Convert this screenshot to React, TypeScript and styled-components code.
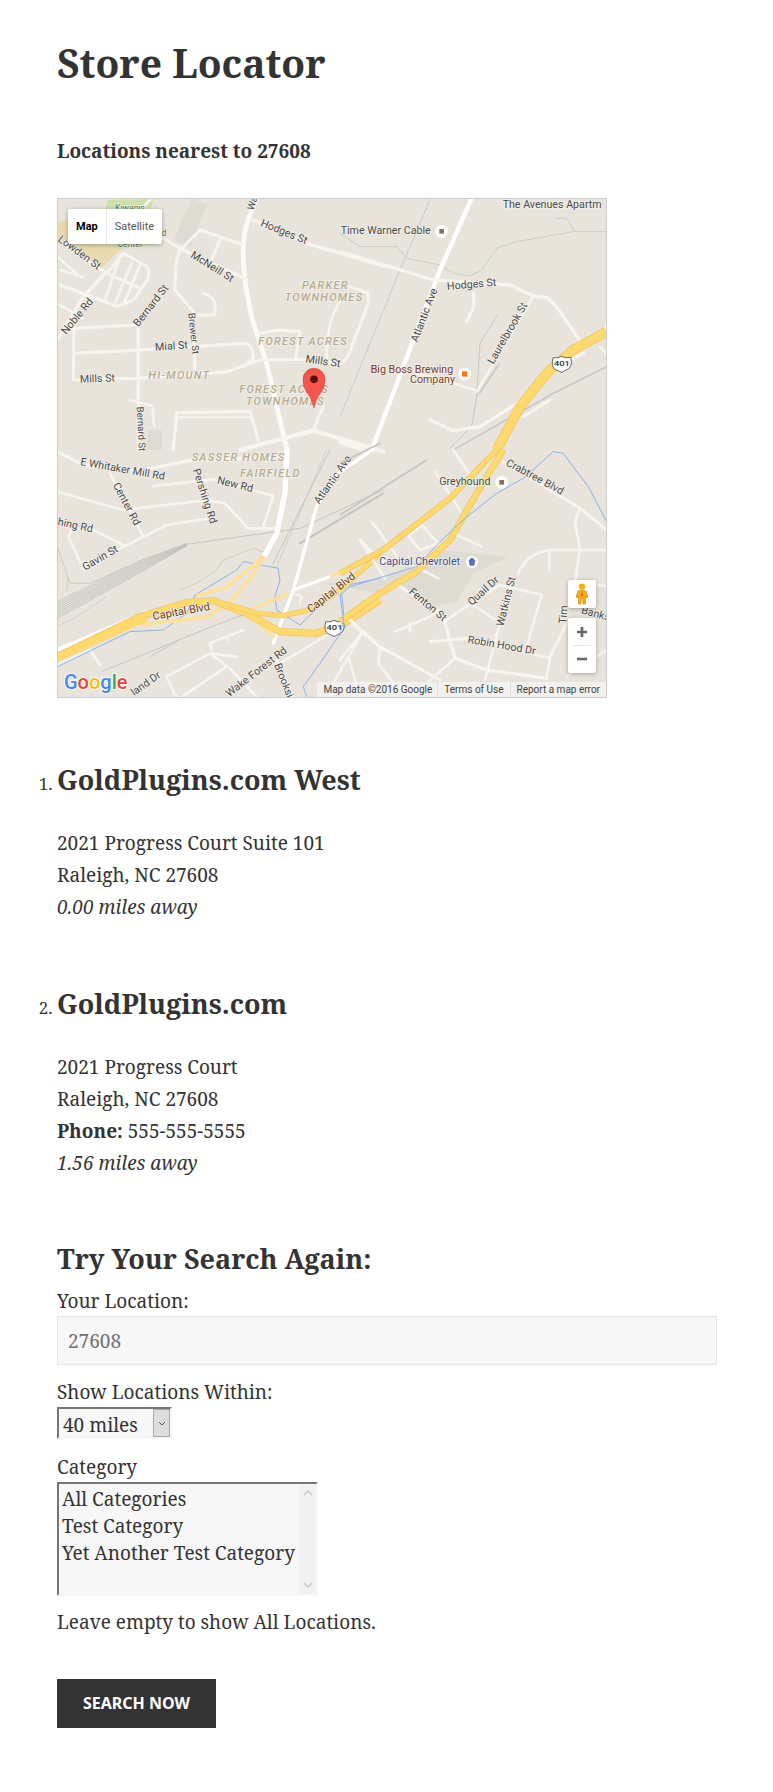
import React from 'react';
import styled, { createGlobalStyle } from 'styled-components';

const Global = createGlobalStyle`
  html, body { margin: 0; padding: 0; background: #fff; }
  body { font-family: "Noto Serif", "DejaVu Serif", serif; color: #333; font-size: 17px; line-height: 32px; }
`;

const Page = styled.main`
  width: 660px;
  padding: 38px 56px 0 57px;
`;
const Title = styled.h1`
  font-size: 39px; line-height: 50px; font-weight: 700; margin: 0 0 47px; color: #333;
`;
const Nearest = styled.p`
  font-size: 19px; line-height: 32px; font-weight: 700; margin: 0 0 31px;
`;
const MapFrame = styled.div`
  position: relative; width: 550px; height: 500px; box-sizing: border-box;
  border: 1px solid #ccc; background: #e8e4dc; overflow: hidden;
`;
const MapSvg = styled.svg`
  display: block; width: 550px; height: 500px; margin: -1px;
`;
const MapType = styled.div`
  position: absolute; left: 10px; top: 10px; height: 35px; display: flex; background: #fff;
  border-radius: 2px; box-shadow: 0 1px 4px rgba(0,0,0,.3);
  font: 11px/35px Roboto, sans-serif;
`;
const MapTypeBtn = styled.span<{ $on?: boolean }>`
  padding: 0 8px; color: ${p => (p.$on ? '#000' : '#565656')}; font-weight: ${p => (p.$on ? 700 : 400)};
  & + & { border-left: 1px solid #e6e6e6; }
`;
const Attribution = styled.div`
  position: absolute; right: 0; bottom: 0; height: 15px; display: flex; background: rgba(245,245,245,.72);
  font: 10px/15px Roboto, sans-serif; color: #444;
`;
const AttrItem = styled.span`
  padding: 0 6px; white-space: nowrap;
  &:first-child { padding-right: 5px; }
  & + & { border-left: 1px solid rgba(220,220,220,.9); }
`;
const Pegman = styled.div`
  position: absolute; right: 10px; top: 381px; width: 28px; height: 28px; background: #fff; border-radius: 2px;
  box-shadow: 0 1px 4px rgba(0,0,0,.3); display: flex; align-items: center; justify-content: center;
`;
const Zoom = styled.div`
  position: absolute; right: 10px; top: 419px; width: 28px; height: 55px; background: #fff; border-radius: 2px;
  box-shadow: 0 1px 4px rgba(0,0,0,.3); display: flex; flex-direction: column; align-items: center; justify-content: space-between;
`;
const ZoomDivider = styled.div`
  width: 18px; height: 1px; background: #e6e6e6;
`;
const ZoomIcon = styled.svg`
  display: block; width: 28px; height: 27px;
`;

const Locations = styled.ol`
  margin: 64px 0 -0.6px; padding: 0;
`;
const Location = styled.li`
  margin: 0 0 62.6px;
`;
const LocName = styled.h3`
  font-size: 27px; line-height: 36px; font-weight: 700; margin: 0 0 29.3px;
`;
const Line = styled.div`
  font-size: 19px; line-height: 32px;
`;
const Away = styled(Line)`
  font-style: italic;
`;
const SearchTitle = styled.h3`
  font-size: 27px; line-height: 36px; font-weight: 700; margin: 0 0 10px;
`;
const Label = styled.label`
  display: block; font-size: 19px; line-height: 29px;
`;
const TextInput = styled.input`
  display: block; width: 660px; height: 49px; box-sizing: border-box; border: 1px solid #e5e5e5;
  background: #f7f7f7; color: #707070; font: inherit; font-size: 19px; padding: 0 10px; margin: 0 0 13px;
`;
const SelectWrap = styled.div`
  position: relative; width: 115px; height: 32px; margin: 0 0 14px;
`;
const Select = styled.select`
  appearance: none; display: block; width: 115px; height: 32px; box-sizing: border-box; border: 2px solid;
  border-color: #767676 #f7f7f7 #f7f7f7 #767676; background: #f7f7f7; color: #333; font: inherit; font-size: 19px;
  padding: 0 0 0 4px; border-radius: 0;
`;
const SelectArrow = styled.div`
  position: absolute; right: 2px; top: 2px; width: 17px; height: 28px; box-sizing: border-box;
  background: #ddd; border: 1px solid #a9a9a9; display: flex; align-items: center; justify-content: center; pointer-events: none;
`;
const ListBox = styled.div`
  display: flex; width: 261px; height: 114px; box-sizing: border-box; border: 2px solid;
  border-color: #767676 #f7f7f7 #f7f7f7 #767676; background: #f7f7f7; margin: 0 0 10px;
`;
const Options = styled.div`
  flex: 1; min-width: 0; padding: 2px 0 0 3px;
`;
const Option = styled.div`
  font-size: 19px; line-height: 27px; white-space: nowrap; color: #333;
`;
const ScrollTrack = styled.div`
  width: 17px; background: #f1f1f1; display: flex; flex-direction: column; justify-content: space-between; align-items: center; padding: 6px 0;
`;
const Hint = styled.p`
  font-size: 19px; line-height: 32px; margin: 0 0 41px;
`;
const Submit = styled.button`
  display: block; width: 159px; height: 49px; border: 0; background: #333; color: #fff;
  font: 700 16px/49px "Noto Sans", sans-serif; text-transform: uppercase; padding: 0; margin: 0 0 64px;
`;

const ROAD = '#f6f4ef';
type R = [string, number, string?];
const roads1: R[] = [
  ['M650 30 Q612 100 610 170 Q606 260 640 400 L680 520 L741 780', 14, '#fbfaf7'],
  ['M640 90 L800 160 L1030 228', 10],
  ['M360 140 L440 185 L620 268', 10],
  ['M480 120 L610 165', 9],
  ['M480 120 L420 180 Q405 210 405 300 L460 365 L465 545', 9],
  ['M540 150 L510 220', 9],
  ['M105 570 L300 565 L560 545 L660 510 L800 508 L900 522 Q925 510 935 470 L985 340 L985 310 L930 290', 9],
  ['M105 490 L300 480 L620 460 Q640 470 640 505 L610 530', 9],
  ['M105 415 L290 405', 9],
  ['M102 410 L100 570', 9],
  ['M295 405 L295 780', 9],
  ['M270 630 L338 648 L342 708', 8],
  ['M52 150 L200 250 L300 295', 9],
  ['M200 250 L250 190 L320 228 Q332 250 322 270 L280 330 L230 350 L170 325 L60 285', 9],
  ['M52 450 L130 320 L195 250', 10],
  ['M240 200 L195 330', 8], ['M275 220 L225 340', 8], ['M300 225 L250 345', 8],
  ['M52 200 L120 260', 8], ['M60 240 L130 262', 8],
  ['M52 340 L130 385', 8],
  ['M490 310 Q525 320 525 345 L525 375 L470 375', 9],
  ['M655 430 L720 420 L780 425 L768 500', 9],
  ['M900 335 Q860 390 860 510', 8],
  ['M400 780 L410 668 L630 664 L655 750', 9],
  ['M410 682 L635 682', 6],
  ['M850 650 L820 720', 9],
  ['M820 722 L1030 785', 13],
  ['M820 722 L600 780', 13],
  ['M330 30 L300 60', 8],
];
const roads2: R[] = [
  ['M395 25 L300 240 L220 450 L95 780', 13, '#ffffff'],
  ['M0 185 L280 270 L510 285 L580 318 L620 322 L650 350 L725 460', 10],
  ['M400 310 L402 350 L380 395', 9],
  ['M270 690 L340 722 L420 710 L540 635 L620 545 L730 490', 10],
  ['M410 605 L580 320', 8],
  ['M230 550 L340 580 L405 600', 8],
  ['M550 680 L630 630', 9],
  ['M0 755 L70 780', 13],
  ['M780 470 L800 490', 8],
  ['M800 400 L790 430', 7],
];
const grey2: R[] = [
  ['M270 30 L180 240 L0 680', 2, '#bdbcb8'],
  ['M800 530 L640 610 L340 780', 4, '#c3c3c1'],
  ['M470 378 L420 460 L410 620 L395 710 L330 775', 2.5, '#c0bfbb'],
  ['M410 620 L470 530', 2.5, '#c0bfbb'], ['M420 610 L480 520', 2.5, '#c0bfbb'],
  ['M0 130 L60 170 L170 170 L200 205 L300 225 L340 250 L390 258 L425 240 L470 175 L530 155 L700 125 L800 125', 2.5, '#c9c6be'],
  ['M645 85 L680 85 L705 125', 2.5, '#c9c6be'],
];
const roads3: R[] = [
  ['M52 5 L130 45 L300 62 L460 30 L741 22', 10],
  ['M210 70 L310 260', 8],
  ['M340 108 L520 88 L700 138 L670 230', 8],
  ['M52 125 L250 180 L500 150 L555 160 L625 235 L710 235', 8],
  ['M510 205 L380 225 L240 295 L130 355 L85 260 L95 235 L160 240 L250 285', 8],
  ['M741 0 L735 130 L710 250 L675 315', 16, '#ffffff'],
  ['M996 0 L880 80 L830 170 L760 420 L700 580', 10, '#ffffff'],
  ['M760 420 L870 380', 10, '#ffffff'],
  ['M52 600 L320 486', 12, '#ffffff'],
  ['M150 600 L180 645', 8],
  ['M52 645 L150 600', 6],
  ['M720 640 L930 515', 7],
  ['M420 745 L560 650 L510 610 L380 680 L410 745', 8],
  ['M510 580 L610 540', 8], ['M565 565 L565 575', 6], ['M510 580 L515 600', 8],
  ['M510 610 L590 620', 8], ['M565 650 L650 740', 8],
  ['M930 515 L1030 600', 8],
  ['M965 550 L880 700', 7], ['M925 620 L960 740', 7],
  ['M710 630 L760 740', 8],
  ['M1000 220 L1030 260', 8], ['M960 270 L1030 340', 8],
  ['M760 430 L785 440 L780 460', 7],
];
const thin3: R[] = [
  ['M185 665 L490 540 L620 490', 3, '#c3c3c1'],
  ['M330 620 L410 575', 2.5, '#c3c3c1'],
  ['M780 280 L1030 130', 6, '#c4c4c2'],
  ['M440 283 L600 260 L780 235', 3, '#c4c4c2'],
  ['M780 235 L1030 120', 3, '#c4c4c2'],
  ['M700 340 L870 0', 3, '#c4c4c2'], ['M710 350 L860 0', 2, '#c4c4c2'],
  ['M52 530 L110 500 L200 440', 2, '#c4c4c2'],
  ['M420 420 L470 400 L530 360 L550 330 L640 295 L680 310', 2.5, '#c9c6be'],
  ['M52 290 L90 400 L150 400 L260 350', 2.5, '#c9c6be'],
  ['M85 380 L80 420', 2, '#c9c6be'],
];
const railFan = Array.from({ length: 9 }, (_, i) => {
  const t = i / 8;
  return `M52 ${455 + 50 * t} L300 ${332 + 36 * t} L440 ${280 + 8 * t}`;
});
const roads4: R[] = [
  ['M490 35 L720 175 L800 240', 9],
  ['M720 175 L705 215 L720 300 L700 430', 8],
  ['M205 258 L245 225 L295 280 L240 300 Z', 8],
  ['M95 215 L175 325 L295 385', 8],
  ['M60 270 L135 385', 8],
  ['M285 65 L360 180', 8], ['M340 250 L425 290', 8],
  ['M175 405 L310 500 L345 625 L440 660 L620 685', 9],
  ['M320 510 L400 455 L480 405 L605 435 L560 590', 8],
  ['M400 465 L480 520', 7], ['M535 370 Q560 310 630 300 L800 300', 8],
  ['M628 305 L628 360', 7],
  ['M520 390 L480 520 L435 690', 8],
  ['M270 575 L380 565 L630 625 L620 685', 8],
  ['M680 520 L630 620', 8],
  ['M345 625 L260 700', 8],
  ['M300 480 L270 500 L165 545 M210 520 L210 545', 8],
  ['M30 510 L120 590 L300 690', 9], ['M65 550 L0 630', 8], ['M120 590 L115 640 L160 700', 8],
  ['M340 0 L390 75', 8],
  ['M770 405 L800 408', 7],
  ['M680 680 L800 600', 7],
];

const Paths = ({ list, color = ROAD }: { list: R[]; color?: string }) => (
  <>
    {list.map(([d, w, c], i) => (
      <path key={i} d={d} fill="none" stroke={c || color} strokeWidth={w} strokeLinecap="round" strokeLinejoin="round" />
    ))}
  </>
);

const Label3 = styled.text<{ $c?: string; $s?: number; $w?: number }>`
  font-family: Roboto, sans-serif;
  font-size: ${p => p.$s || 32}px;
  fill: ${p => p.$c || '#4a4a48'};
  font-weight: ${p => p.$w || 400};
  stroke: rgba(245,243,238,.8); stroke-width: 5px; paint-order: stroke; stroke-linejoin: round;
`;
const Hood = styled(Label3)`
  font-style: italic; letter-spacing: 3.8px; font-weight: 500;
`;
const T = ({ x, y, r, children, c, s }: { x: number; y: number; r?: number; children: string; c?: string; s?: number }) => (
  <Label3 x={x} y={y} $c={c} $s={s} transform={r ? `rotate(${r} ${x} ${y})` : undefined}>{children}</Label3>
);
const H = ({ x, y, children }: { x: number; y: number; children: string }) => (
  <Hood x={x} y={y} $c="#b6ab8e" $s={33}>{children}</Hood>
);
const Shield = ({ x, y }: { x: number; y: number }) => (
  <g transform={`translate(${x} ${y}) scale(1.65 1.3)`}>
    <path d="M2 4 Q10 6 17 1 Q24 6 34 3 Q38 22 30 30 Q22 34 18 38 Q10 33 5 31 Q-2 22 2 4Z" fill="#fff" stroke="#444" strokeWidth="1.6" />
    <text x="18" y="24" textAnchor="middle" fontFamily="Roboto, sans-serif" fontSize="17" fontWeight="500" fill="#333">401</text>
  </g>
);

const MapDrawing = () => (
  <MapSvg viewBox="0 0 550 500" aria-label="Map">
    <rect width="550" height="500" fill="#e8e4dc" />
    <g transform="translate(-17 -8) scale(.3333)">
      <path d="M205 30 L340 28 L330 60 L365 100 L370 160 L250 175 L230 185 L205 160 L180 100Z" fill="#cfdfa9" />
      <path d="M52 100 L170 60 L205 150 L240 180 L180 240 L52 150Z" fill="#e8d9ae" />
      <path d="M455 25 L502 45 L450 175 L402 150Z" fill="#dedbd3" />
      <path d="M325 720 L365 720 L365 780 L320 780Z" fill="#dedbd3" />
      <Paths list={roads1} />
      <T x={225} y={62} c="#4d7c3a" s={26}>Kiwanis</T>
      <T x={350} y={138} c="#4d7c3a" s={26}>nd</T>
      <T x={232} y={172} c="#4d7c3a" s={26}>Center</T>
      <T x={902} y={132}>Time Warner Cable</T>
      <T x={660} y={107} r={22}>Hodges St</T>
      <T x={450} y={200} r={32}>McNeill St</T>
      <T x={52} y={152} r={36}>Lowden St</T>
      <T x={78} y={435} r={-50}>Noble Rd</T>
      <T x={295} y={412} r={-52}>Bernard St</T>
      <T x={445} y={370} r={84} s={29}>Brewer St</T>
      <T x={346} y={482} r={-4}>Mial St</T>
      <T x={120} y={578} r={-2}>Mills St</T>
      <T x={796} y={517} r={8}>Mills St</T>
      <T x={290} y={650} r={87} s={29}>Bernard St</T>
      <H x={786} y={297}>PARKER</H>
      <H x={734} y={333}>TOWNHOMES</H>
      <H x={655} y={465}>FOREST ACRES</H>
      <H x={325} y={568}>HI-MOUNT</H>
      <H x={598} y={610}>FOREST ACRES</H>
      <H x={618} y={645}>TOWNHOMES</H>
      <T x={640} y={62} r={-72} s={29}>Wa</T>
      <T x={990} y={548} c="#7b3f30">Bi</T>
      <path d="M822 654 Q816 625 800 606 Q789 592 789 568 A33 33 0 0 1 855 568 Q855 592 844 606 Q828 625 822 654Z" fill="#f4564c" stroke="#c8382e" strokeWidth="1.5" />
      <circle cx="822" cy="568" r="11.5" fill="#5b0f0d" />
    </g>
    <g transform="translate(283 -8) scale(.3333)">
      <Paths list={grey2} />
      <Paths list={roads2} />
      <path d="M800 425 L700 480 L620 550 L540 650 L470 780" fill="none" stroke="#f2c75f" strokeWidth="30" />
      <path d="M800 425 L700 480 L620 550 L540 650 L470 780" fill="none" stroke="#fdd96f" strokeWidth="25" />
      <circle cx="305" cy="124" r="19" fill="#fff" /><rect x="298" y="117" width="14" height="14" fill="#8b6f61" />
      <circle cx="374" cy="552" r="19" fill="#fff" /><rect x="366" y="544" width="16" height="16" fill="#f77b12" />
      <T x={488} y={55}>The Avenues Apartm</T>
      <T x={92} y={548} c="#7b3f30">Big Boss Brewing</T>
      <T x={210} y={580} c="#7b3f30">Company</T>
      <T x={232} y={458} r={-69}>Atlantic Ave</T>
      <T x={322} y={300} r={-5}>Hodges St</T>
      <T x={460} y={524} r={-60}>Laurelbrook St</T>
      <Shield x={636} y={498} />
    </g>
    <g transform="translate(-17 252) scale(.3333)">
      <path d="M840 400 L1020 395 L1020 430Z" fill="#dedbd3" />
      <Paths list={thin3} />
      {railFan.map(d => <path key={d} d={d} fill="none" stroke="#c0c0be" strokeWidth="2.5" />)}
      <Paths list={roads3} />
      <g fill="none" stroke="#8cb2ee" strokeWidth="3">
        <path d="M52 650 L270 545 L370 540 L440 490 L465 435 L590 360 L610 335 L715 355 L720 390 L705 440 L710 480 L780 525 L900 410 L1020 385" />
        <path d="M905 430 L915 530 L840 640 L790 710 L800 740" />
      </g>
      <g fill="none" stroke="#fde0a0" strokeWidth="11" strokeLinejoin="round">
        <path d="M300 525 L410 512 L500 500 L565 462 L640 372 L672 318" />
        <path d="M470 437 L560 412 L672 320" />
        <path d="M640 475 L745 430" />
        <path d="M610 485 L705 560" />
        <path d="M870 380 L1020 312" />
      </g>
      <g fill="none" strokeLinejoin="round">
        <path d="M52 620 L300 500 L440 458 L520 452 L620 490 L720 545 L830 550 L930 510 L1020 450" stroke="#f2c75f" strokeWidth="22" />
        <path d="M52 620 L300 500 L440 458 L520 452 L620 490 L720 545 L830 550 L930 510 L1020 450" stroke="#fdd96f" strokeWidth="17" />
        <path d="M52 626 L320 505" stroke="#fdd96f" strokeWidth="18" />
        <path d="M560 462 L650 490 L730 497 L810 480 L900 420 L1020 312" stroke="#f2c75f" strokeWidth="16" />
        <path d="M560 462 L650 490 L730 497 L810 480 L900 420 L1020 312" stroke="#fdd96f" strokeWidth="12" />
      </g>
      <T x={120} y={45} r={10}>E Whitaker Mill Rd</T>
      <T x={530} y={100} r={14}>New Rd</T>
      <T x={218} y={105} r={62}>Center Rd</T>
      <T x={458} y={60} r={72}>Pershing Rd</T>
      <T x={52} y={225} r={12}>hing Rd</T>
      <T x={135} y={362} r={-30}>Gavin St</T>
      <T x={838} y={164} r={-55}>Atlantic Ave</T>
      <T x={340} y={510} r={-10} c="#6a3b0c" s={33}>Capital Blvd</T>
      <T x={812} y={490} r={-38} c="#6a3b0c" s={33}>Capital Blvd</T>
      <T x={568} y={742} r={-38}>Wake Forest Rd</T>
      <T x={702} y={645} r={68}>Brooksi</T>
      <T x={282} y={738} r={-35}>land Dr</T>
      <H x={455} y={32}>SASSER HOMES</H>
      <H x={600} y={80}>FAIRFIELD</H>
      <Shield x={854} y={510} />
      <text x={72} y={716} fontFamily="Roboto, sans-serif" fontSize="60" fontWeight="500" stroke="#fff" strokeWidth="5" paintOrder="stroke">
        <tspan fill="#4285f4">G</tspan><tspan fill="#ea4335">o</tspan><tspan fill="#fbbc05">o</tspan><tspan fill="#4285f4">g</tspan><tspan fill="#34a853">l</tspan><tspan fill="#ea4335">e</tspan>
      </text>
    </g>
    <g transform="translate(283 252) scale(.3333)">
      <path d="M40 410 L150 375 L300 300 L505 320 L400 370 L350 455 L280 470 L180 410Z" fill="#dedbd3" />
      <Paths list={roads4} />
      <path d="M490 0 L410 130 L330 270 L230 365 L120 430 L0 515" fill="none" stroke="#f2c75f" strokeWidth="20" />
      <path d="M490 0 L410 130 L330 270 L230 365 L120 430 L0 515" fill="none" stroke="#fdd96f" strokeWidth="15" />
      <path d="M470 0 L330 145 L130 300 L0 370" fill="none" stroke="#f2c75f" strokeWidth="18" />
      <path d="M470 0 L330 145 L130 300 L0 370" fill="none" stroke="#fdd96f" strokeWidth="13" />
      <g fill="none" stroke="#8cb2ee" strokeWidth="3">
        <path d="M800 215 L745 110 L670 10 L640 5 L550 85 L470 130 L375 205 L295 280 L230 350 L130 380 L30 410 L0 435 L10 510 L0 555" />
      </g>
      <path d="M0 40 L120 -20 M0 195 L260 30" fill="none" stroke="#c4c4c2" strokeWidth="5" />
      <circle cx="485" cy="97" r="19" fill="#fff" /><rect x="478" y="90" width="14" height="14" fill="#8b6f61" />
      <circle cx="396" cy="336" r="18" fill="#fff" />
      <path d="M387 330 H405 L402 346 H390Z M391 330 A5 6 0 0 1 401 330" fill="#5b6bc0" stroke="#5b6bc0" strokeWidth="2" />
      <T x={298} y={106}>Greyhound</T>
      <T x={496} y={45} r={28}>Crabtree Blvd</T>
      <T x={118} y={346} c="#3f4f88">Capital Chevrolet</T>
      <T x={205} y={428} r={40}>Fenton St</T>
      <T x={395} y={468} r={-42}>Quail Dr</T>
      <T x={490} y={530} r={-76}>Watkins St</T>
      <T x={382} y={578} r={10}>Robin Hood Dr</T>
      <T x={678} y={522} r={-85}>Tim</T>
      <T x={722} y={490} r={15}>Banks</T>
    </g>
  </MapSvg>
);

const miles = ['40 miles'];

export default function App() {
  return (
    <>
      <Global />
      <Page>
        <Title>Store Locator</Title>
        <Nearest>Locations nearest to 27608</Nearest>
        <MapFrame>
          <MapDrawing />
          <MapType>
            <MapTypeBtn $on>Map</MapTypeBtn>
            <MapTypeBtn>Satellite</MapTypeBtn>
          </MapType>
          <Pegman>
            <svg width="14" height="22" viewBox="0 0 14 22">
              <circle cx="7" cy="3.6" r="3.2" fill="#f5b019" />
              <path d="M3 8 Q7 6 11 8 L13 14 L11 15 L10.5 12 L10.5 21 L8 21 L7.5 15 L6.5 15 L6 21 L3.5 21 L3.5 12 L3 15 L1 14Z" fill="#f5b019" stroke="#c98a0c" strokeWidth=".6" />
              <path d="M7 8 L8 12 L7 14 L6 12Z" fill="#e2592b" />
            </svg>
          </Pegman>
          <Zoom>
            <ZoomIcon viewBox="0 0 28 27"><path d="M14 9V19M9 14H19" stroke="#666" strokeWidth="2.6" /></ZoomIcon>
            <ZoomDivider />
            <ZoomIcon viewBox="0 0 28 27"><path d="M9 13H19" stroke="#666" strokeWidth="2.6" /></ZoomIcon>
          </Zoom>
          <Attribution>
            <AttrItem>Map data ©2016 Google</AttrItem>
            <AttrItem>Terms of Use</AttrItem>
            <AttrItem>Report a map error</AttrItem>
          </Attribution>
        </MapFrame>
        <Locations>
          <Location>
            <LocName>GoldPlugins.com West</LocName>
            <Line>2021 Progress Court Suite 101</Line>
            <Line>Raleigh, NC 27608</Line>
            <Away>0.00 miles away</Away>
          </Location>
          <Location>
            <LocName>GoldPlugins.com</LocName>
            <Line>2021 Progress Court</Line>
            <Line>Raleigh, NC 27608</Line>
            <Line><strong>Phone:</strong> 555-555-5555</Line>
            <Away>1.56 miles away</Away>
          </Location>
        </Locations>
        <form>
          <SearchTitle>Try Your Search Again:</SearchTitle>
          <Label htmlFor="loc">Your Location:</Label>
          <TextInput id="loc" defaultValue="27608" />
          <Label htmlFor="mi">Show Locations Within:</Label>
          <SelectWrap>
            <Select id="mi" defaultValue={miles[0]}>
              {miles.map(m => <option key={m}>{m}</option>)}
            </Select>
            <SelectArrow>
              <svg width="8" height="5" viewBox="0 0 8 5"><path d="M1 1L4 4L7 1" fill="none" stroke="#555" /></svg>
            </SelectArrow>
          </SelectWrap>
          <Label>Category</Label>
          <ListBox>
            <Options>
              <Option>All Categories</Option>
              <Option>Test Category</Option>
              <Option>Yet Another Test Category</Option>
            </Options>
            <ScrollTrack>
              <svg width="10" height="6" viewBox="0 0 10 6"><path d="M1 5L5 1L9 5" fill="none" stroke="#c4c4c4" strokeWidth="1.4" /></svg>
              <svg width="10" height="6" viewBox="0 0 10 6"><path d="M1 1L5 5L9 1" fill="none" stroke="#c4c4c4" strokeWidth="1.4" /></svg>
            </ScrollTrack>
          </ListBox>
          <Hint>Leave empty to show All Locations.</Hint>
          <Submit type="button">Search Now</Submit>
        </form>
      </Page>
    </>
  );
}
